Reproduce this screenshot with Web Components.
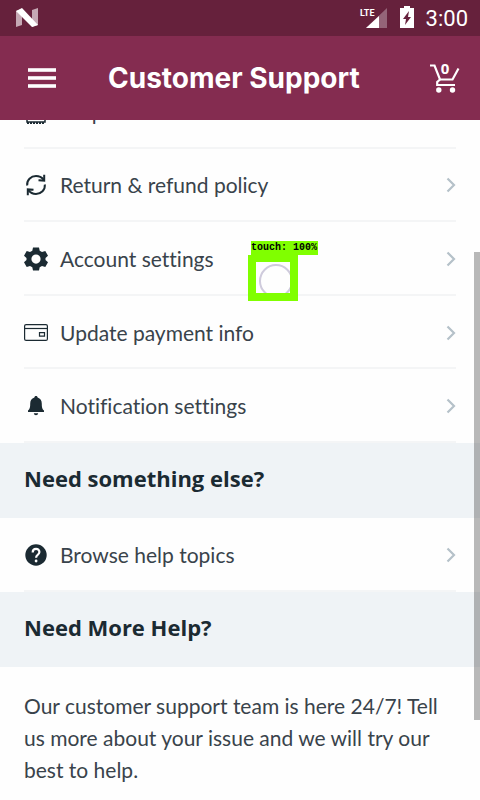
<!DOCTYPE html>
<html lang="en">
<head>
<meta charset="utf-8">
<meta name="viewport" content="width=device-width, initial-scale=1">
<title>Customer Support</title>
<style>
  body {
    margin: 0;
    --ink: #39434b;
    --heading: #1b2a32;
    --brand: #842c50;
    --brand-dark: #66213c;
    --band: #eff3f6;
    --line: #f4f5f6;
    color: var(--ink);
    background: #fefefe;
    font: 21px/32px Lato, "Open Sans", sans-serif;
    font-variant-ligatures: none;
  }
</style>
</head>
<body>
<support-app></support-app>
<script>
const define = (name, html, setup) => {
  const template = document.createElement('template');
  template.innerHTML = html;
  customElements.define(name, class extends HTMLElement {
    constructor() {
      super();
      const root = this.attachShadow({ mode: 'open' });
      root.append(template.content.cloneNode(true));
      if (setup) setup(this, root);
    }
  });
};

const icons = {
  receipt: '<path d="M3 1h18v21H3zM7 7h10M7 12h10" fill="none" stroke="currentColor" stroke-width="1.500"/><path d="M3 23h18" stroke="currentColor" stroke-width="2" stroke-dasharray="2 1"/>',
  refresh: '<g fill="none" stroke="currentColor" stroke-width="2"><path d="M3.200 12.500C2.500 7 7 3 12 3c3.200 0 5.800 1.300 7.800 3.800M20.800 11.500C21.500 17 17 21 12 21c-3.200 0-5.800-1.300-7.800-3.800"/><path d="M20.200 1.800v5.800l-5.700-.4M3.800 22.200v-5.800l5.700.4"/></g>',
  gear: '<path fill="currentColor" fill-rule="evenodd" d="M9 .5h6l.7 3.300 2.300 1.300 3.300-1.100 2.700 4.800L21.500 11v2.100l2.500 2.200-2.700 4.800-3.300-1.100-2.300 1.300-.7 3.200H9l-.7-3.200L6 19l-3.300 1.100L0 15.300l2.500-2.200V11L0 8.800 2.700 4 6 5.100l2.300-1.300zM12 7.500a4.600 4.600 0 1 0 0 9.200 4.600 4.600 0 0 0 0-9.200z"/>',
  card: '<g fill="none" stroke="currentColor" stroke-width="1.200"><rect x=".6" y="3.600" width="22.800" height="15.800" rx="1.500"/><path d="M1 7.500h22"/><path d="M15.500 11.700h5v3.500h-5z"/></g>',
  bell: '<path fill="currentColor" d="M12 2c-1 0-1.600.6-1.600 1.600C7.500 4.400 6.200 6.800 6.200 9.800c0 4-.5 5.300-2.200 6.800v1.400h16v-1.400c-1.700-1.500-2.200-2.800-2.200-6.800 0-3-1.300-5.400-4.200-6.200C13.600 2.600 13 2 12 2zM9.800 19.200h4.400c-.2 1.300-1 2-2.200 2s-2-.7-2.200-2z"/>',
  help: '<circle cx="12" cy="12" r="10.700" fill="currentColor"/><path d="M8.700 9.400c0-4.600 6.700-4.500 6.700-.4 0 2.700-3.300 2.800-3.300 5.700" fill="none" stroke="#fff" stroke-width="2.200"/><circle cx="12.100" cy="18" r="1.400" fill="#fff"/>'
};

define('status-bar', `
  <style>
    :host { display: flex; align-items: center; height: 36px; padding: 0 12px 0 16px; background: var(--brand-dark); color: #fff; font: 400 22px/36px Roboto, sans-serif; }
    .logo { width: 22px; height: 20px; margin-right: auto; }
    .signal { width: 28px; height: 24px; margin-right: 12px; }
    .battery { width: 16px; height: 24px; margin-right: 11px; }
    svg { display: block; }
    .time { padding-top: 2px; }
  </style>
  <svg class="logo" viewBox="0 0 22 20" aria-hidden="true"><path d="M0 3l6-2v16l-6 2zM16 2l6-2v17l-6 2z" fill="#c5a8b4"/><path d="M0 3l6-3 16 17-6 2z" fill="#fff"/></svg>
  <svg class="signal" viewBox="0 0 28 24" aria-label="LTE"><path d="M28 2v20H7z" fill="#946478"/><path d="M20 10v12H7z" fill="#fff"/><text x="1" y="10" fill="#fff" font-family="Roboto, sans-serif" font-size="9" font-weight="700">LTE</text></svg>
  <svg class="battery" viewBox="0 0 16 24" aria-hidden="true"><path d="M5 0h6v2h4v20H1V2h4z" fill="#fff"/><path d="M10 5l-6 8h3l-1 6 6-8H9z" fill="#66213c"/></svg>
  <span class="time">3:00</span>`);

define('app-header', `
  <style>
    :host { display: flex; align-items: center; height: 84px; padding: 0 20px 0 28px; background: var(--brand); color: #fff; }
    button { padding: 0; border: 0; background: none; color: inherit; display: block; }
    h1 { margin: 0 auto 0 52px; font: 700 28px/40px Inter, "Open Sans", sans-serif; }
    svg { display: block; }
    .cart { position: relative; }
    .cart span { position: absolute; left: 0; right: 0; top: -4px; font: 700 15px/18px "Open Sans", sans-serif; text-align: center; }
  </style>
  <button aria-label="Menu"><svg width="28" height="22" viewBox="0 0 28 22"><path d="M0 3h28M0 11h28M0 19h28" stroke="#e6d5dc" stroke-width="4"/><path d="M0 3h28M0 11h28M0 19h28" stroke="#fff" stroke-width="2"/></svg></button>
  <h1><slot></slot></h1>
  <button class="cart" aria-label="Cart"><svg width="30" height="30" viewBox="0 0 30 30"><g fill="none" stroke="#fff" stroke-width="2.200"><path d="M0 2.500h4.500L10 16.500h12.500L28.500 5.500"/><path d="M10 16.500L7.200 19v3H25"/></g><circle cx="8.800" cy="27" r="2.700" fill="#fff"/><circle cx="22.500" cy="27" r="2.700" fill="#fff"/></svg><span>0</span></button>`);

define('menu-list', `
  <style>
    :host { display: grid; grid-auto-rows: 1fr; }
  </style>
  <slot></slot>`);

define('menu-row', `
  <style>
    :host { display: grid; min-height: 73px; margin: 0 24px; padding-top: 2px; border-bottom: 2px solid var(--line); box-sizing: border-box; }
    a { display: flex; align-items: center; color: inherit; text-decoration: none; }
    .icon { width: 24px; height: 24px; margin-right: 12px; color: var(--heading); flex: none; }
    .label { flex: 1; }
    .chevron { width: 10px; height: 16px; flex: none; }
  </style>
  <a href="#"><svg class="icon" viewBox="0 0 24 24" aria-hidden="true"></svg><span class="label"><slot></slot></span>
  <svg class="chevron" viewBox="0 0 10 16" aria-hidden="true"><path d="M1.500 1.500L8 8l-6.500 6.500" fill="none" stroke="#b5c1c9" stroke-width="2.200"/></svg></a>`,
  (host, root) => { root.querySelector('.icon').innerHTML = icons[host.getAttribute('icon')] || ''; });

define('section-title', `
  <style>
    :host { display: block; padding: 19px 24px 24px; background: var(--band); color: var(--heading); }
    h2 { margin: 0; font: 700 22px/32px "Open Sans", sans-serif; }
  </style>
  <h2><slot></slot></h2>`);

define('touch-marker', `
  <style>
    :host { display: block; width: 50px; }
    .label { display: block; width: max-content; margin-left: 3px; background: #80ff00; color: #000; font: 700 11px/14px "Liberation Mono", monospace; font-size: 10px; padding-right: 1px; }
    .box { height: 31px; border: 8px solid #80ff00; border-top-width: 7px; overflow: hidden; }
    svg { display: block; }
  </style>
  <span class="label">touch: 100%</span>
  <div class="box"><svg width="34" height="31" viewBox="0 0 34 31" aria-hidden="true"><circle cx="20" cy="19" r="16" fill="none" stroke="#cfcbdc" stroke-width="2"/></svg></div>`);

define('support-app', `
  <style>
    :host { display: flex; flex-direction: column; height: 100vh; position: relative; overflow: hidden; }
    status-bar, app-header { flex: none; position: relative; z-index: 1; }
    main { flex: 1; min-height: 0; }
    .account { min-height: 368px; margin-top: -45px; }
    .help { min-height: 74px; }
    p { margin: 0; padding: 23px 24px; }
    .thumb { position: absolute; right: 0; top: 252px; width: 6px; height: 468px; background: rgba(60, 60, 60, .36); }
    touch-marker { position: absolute; left: 248px; top: 241px; }
  </style>
  <status-bar></status-bar>
  <app-header>Customer Support</app-header>
  <main>
    <menu-list class="account">
      <menu-row icon="receipt">Help with an order</menu-row>
      <menu-row icon="refresh">Return &amp; refund policy</menu-row>
      <menu-row icon="gear">Account settings</menu-row>
      <menu-row icon="card">Update payment info</menu-row>
      <menu-row icon="bell">Notification settings</menu-row>
    </menu-list>
    <section-title>Need something else?</section-title>
    <menu-list class="help">
      <menu-row icon="help">Browse help topics</menu-row>
    </menu-list>
    <section-title>Need More Help?</section-title>
    <p>Our customer support team is here 24/7! Tell us more about your issue and we will try our best to help.</p>
  </main>
  <div class="thumb"></div>
  <touch-marker></touch-marker>`);
</script>
</body>
</html>
